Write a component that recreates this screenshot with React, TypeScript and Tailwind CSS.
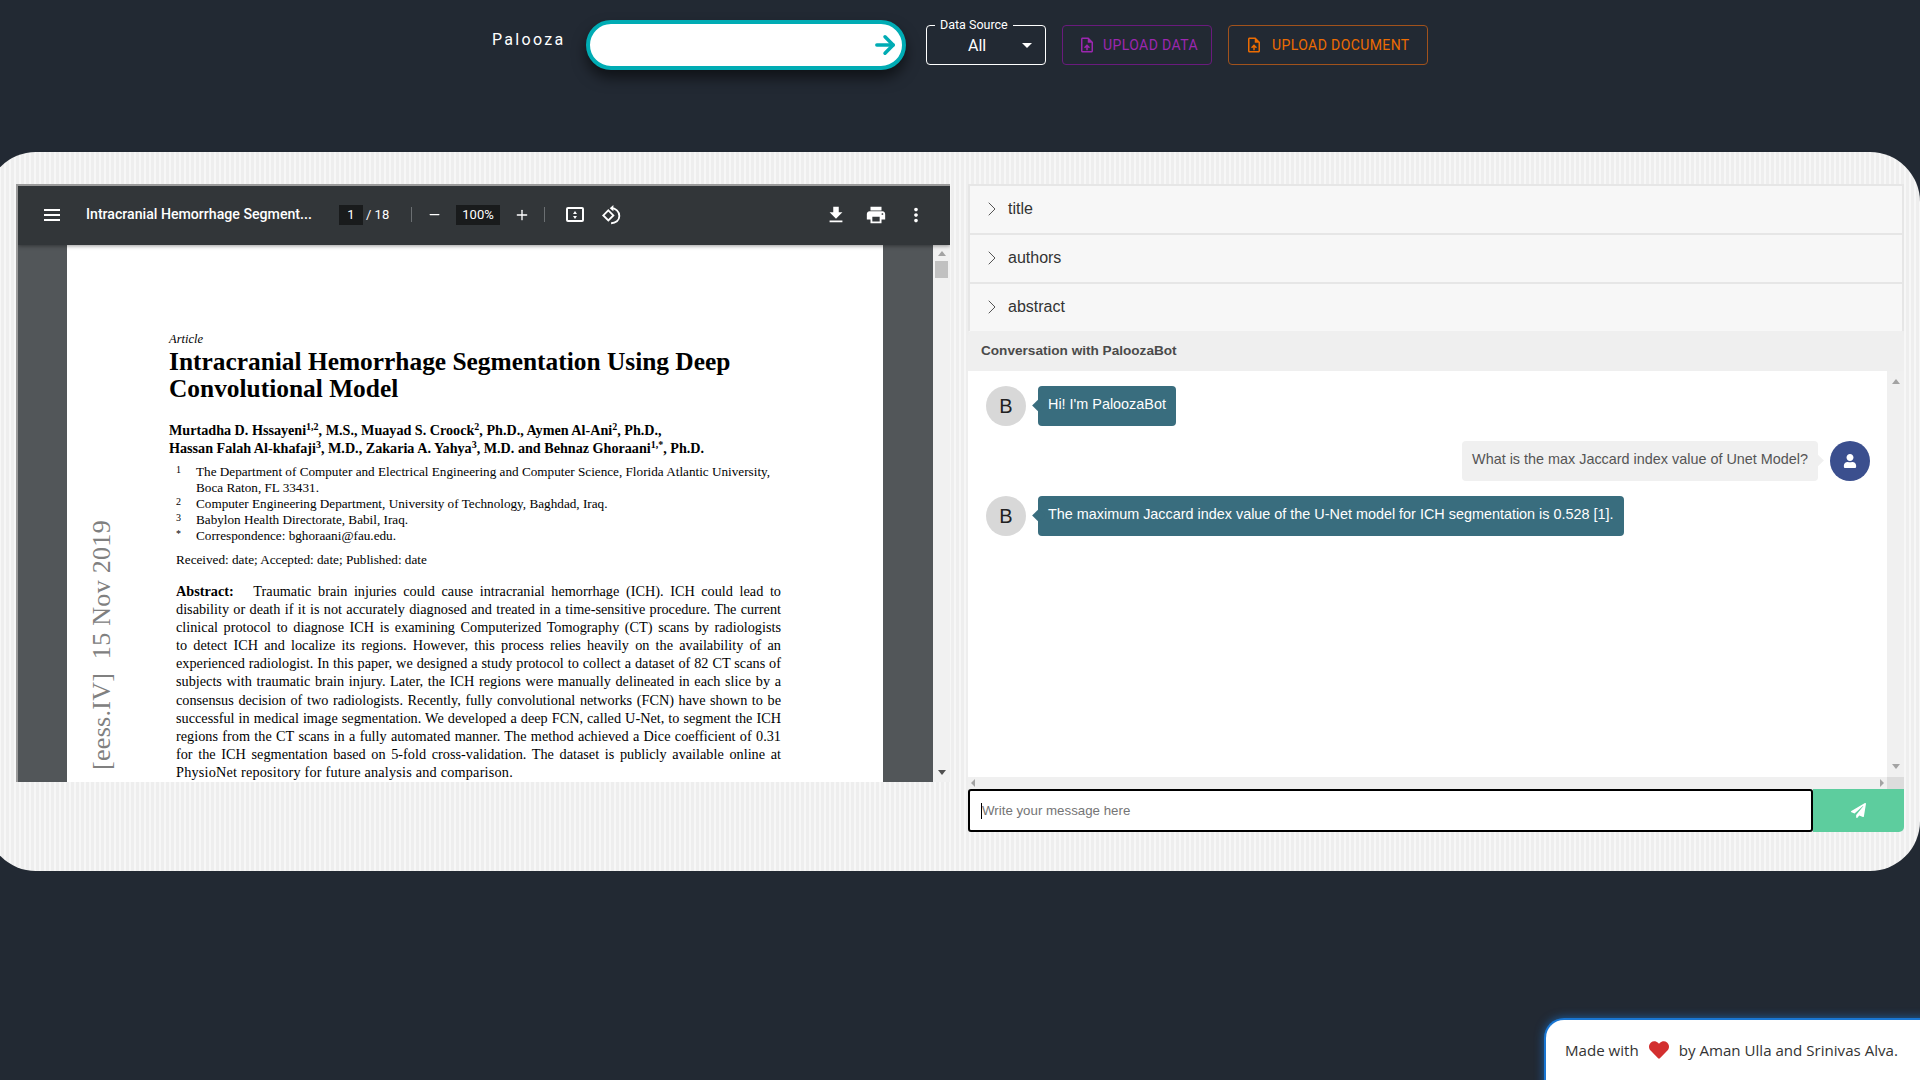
import React from "react";
import { ArrowRight, ChevronRight, Minus, Plus } from "lucide-react";
import { FaHeart, FaPaperPlane, FaUser } from "react-icons/fa";

const uploadPath =
  "M14 2H6c-1.1 0-1.99.9-1.99 2L4 20c0 1.1.89 2 1.99 2H18c1.1 0 2-.9 2-2V8l-6-6zm4 18H6V4h7v5h5v11zM8 15.01l1.41 1.41L11 14.84V19h2v-4.16l1.59 1.59L16 15.01 12.01 11 8 15.01z";

function MaterialIcon({ d, className }: { d: string; className: string }) {
  return (
    <svg viewBox="0 0 24 24" fill="currentColor" className={className}>
      <path d={d} />
    </svg>
  );
}

const affiliations = [
  ["1", "The Department of Computer and Electrical Engineering and Computer Science, Florida Atlantic University,"],
  ["", "Boca Raton, FL 33431."],
  ["2", "Computer Engineering Department, University of Technology, Baghdad, Iraq."],
  ["3", "Babylon Health Directorate, Babil, Iraq."],
  ["*", "Correspondence: bghoraani@fau.edu."],
];

const abstractLines = [
  "disability or death if it is not accurately diagnosed and treated in a time-sensitive procedure. The current",
  "clinical protocol to diagnose ICH is examining Computerized Tomography (CT) scans by radiologists",
  "to detect ICH and localize its regions.  However, this process relies heavily on the availability of an",
  "experienced radiologist. In this paper, we designed a study protocol to collect a dataset of 82 CT scans of",
  "subjects with traumatic brain injury. Later, the ICH regions were manually delineated in each slice by a",
  "consensus decision of two radiologists. Recently, fully convolutional networks (FCN) have shown to be",
  "successful in medical image segmentation. We developed a deep FCN, called U-Net, to segment the ICH",
  "regions from the CT scans in a fully automated manner. The method achieved a Dice coefficient of 0.31",
  "for the ICH segmentation based on 5-fold cross-validation. The dataset is publicly available online at",
];

function PdfViewer() {
  return (
    <div className="w-[934px] h-[598px] border-t-2 border-l-2 border-[#9a9a9a] flex flex-col overflow-hidden shrink-0">
      <div className="h-[59px] pb-[2px] bg-[#323639] text-white flex items-center text-[13px] font-['Roboto',sans-serif] shrink-0 z-10 shadow-[0_1px_4px_rgba(0,0,0,0.4)]">
        <div className="ml-[26px] w-[16px] flex flex-col gap-[3px]">
          <div className="h-[2px] bg-white" />
          <div className="h-[2px] bg-white" />
          <div className="h-[2px] bg-white" />
        </div>
        <div className="ml-[26px] w-[253px] text-[14.15px] font-medium truncate">Intracranial Hemorrhage Segment...</div>
        <div className="w-[24px] h-[20px] bg-[#191b1c] text-center leading-[20px]">1</div>
        <div className="ml-[3px] w-[24px] whitespace-nowrap">/ 18</div>
        <div className="ml-[21px] w-px h-[15px] bg-[#6b6f72]" />
        <Minus className="ml-[15px] w-[15px] h-[15px]" />
        <div className="ml-[14px] w-[44px] h-[20px] bg-[#191b1c] text-center leading-[20px]">100%</div>
        <Plus className="ml-[14px] w-[16px] h-[16px]" />
        <div className="ml-[14px] w-px h-[15px] bg-[#6b6f72]" />
        <div className="ml-[21px] w-[18px] h-[15px] border-2 border-white rounded-[2px] flex flex-col items-center justify-center gap-[2px]">
          <div className="w-0 h-0 border-x-[2.5px] border-x-transparent border-b-[3px] border-b-white" />
          <div className="w-0 h-0 border-x-[2.5px] border-x-transparent border-t-[3px] border-t-white" />
        </div>
        <svg viewBox="0 0 24 24" className="ml-[17px] w-[22px] h-[22px]" fill="none" stroke="white" strokeWidth="2">
          <path d="M8 7l5.5 5.5L8 18l-5.5-5.5z" />
          <path d="M11 4.5c5 0 9 3.5 9 8.5s-4 8-9 8" />
          <path d="M13.5 1L9.5 4.5l4 3.5z" fill="white" stroke="none" />
        </svg>
        <div className="ml-auto flex items-center mr-[23px] gap-[18px]">
          <MaterialIcon d="M19 9h-4V3H9v6H5l7 7 7-7zM5 18v2h14v-2H5z" className="w-[22px] h-[22px]" />
          <MaterialIcon
            d="M19 8H5c-1.66 0-3 1.34-3 3v6h4v4h12v-4h4v-6c0-1.66-1.34-3-3-3zm-3 11H8v-5h8v5zm3-7c-.55 0-1-.45-1-1s.45-1 1-1 1 .45 1 1-.45 1-1 1zm-1-9H6v4h12V3z"
            className="w-[22px] h-[22px]"
          />
          <MaterialIcon
            d="M12 8c1.1 0 2-.9 2-2s-.9-2-2-2-2 .9-2 2 .9 2 2 2zm0 2c-1.1 0-2 .9-2 2s.9 2 2 2 2-.9 2-2-.9-2-2-2zm0 6c-1.1 0-2 .9-2 2s.9 2 2 2 2-.9 2-2-.9-2-2-2z"
            className="w-[22px] h-[22px]"
          />
        </div>
      </div>
      <div className="flex-1 flex min-h-0">
        <div className="flex-1 bg-[#525659] pl-[49px] overflow-hidden">
          <div className="w-[816px] h-[800px] bg-white pt-[87px] pl-[102px] relative text-black font-['Liberation_Serif',serif]">
            <div className="absolute left-[15px] top-[275px] h-[250px] [writing-mode:vertical-rl] rotate-180 text-[26px] tracking-[0.3px] text-[#808080] whitespace-nowrap">
              [eess.IV]&nbsp; 15 Nov 2019
            </div>
            <div className="text-[12.5px] italic leading-[14px]">Article</div>
            <div className="text-[25.4px] font-bold leading-[27px] mt-[2px]">
              <div>Intracranial Hemorrhage Segmentation Using Deep</div>
              <div>Convolutional Model</div>
            </div>
            <div className="mt-[19px] text-[14.15px] font-bold leading-[18px]">
              <div>
                Murtadha D. Hssayeni<sup className="text-[10px]">1,2</sup>, M.S., Muayad S. Croock<sup className="text-[10px]">2</sup>, Ph.D., Aymen Al-Ani<sup className="text-[10px]">2</sup>, Ph.D.,
              </div>
              <div>
                Hassan Falah Al-khafaji<sup className="text-[10px]">3</sup>, M.D., Zakaria A. Yahya<sup className="text-[10px]">3</sup>, M.D. and Behnaz Ghoraani<sup className="text-[10px]">1,*</sup>, Ph.D.
              </div>
            </div>
            <div className="mt-[7px] ml-[7px] text-[13.2px] leading-[16px]">
              {affiliations.map(([n, text]) => (
                <div key={text} className="flex">
                  <div className="w-[20px] text-[10px] leading-[12px] shrink-0">{n}</div>
                  <div>{text}</div>
                </div>
              ))}
            </div>
            <div className="mt-[8px] ml-[7px] text-[13.2px] leading-[16px]">Received: date; Accepted: date; Published: date</div>
            <div className="mt-[14px] ml-[7px] w-[605px] text-[14.25px] leading-[18.1px]">
              <div className="text-justify [text-align-last:justify]">
                <b>Abstract:</b>&nbsp;&nbsp; Traumatic brain injuries could cause intracranial hemorrhage (ICH). ICH could lead to
              </div>
              {abstractLines.map((line) => (
                <div key={line} className="text-justify [text-align-last:justify] whitespace-nowrap">
                  {line}
                </div>
              ))}
              <div className="tracking-[0.2px]">PhysioNet repository for future analysis and comparison.</div>
            </div>
          </div>
        </div>
        <div className="w-[17px] bg-[#f1f1f1] flex flex-col items-center shrink-0">
          <div className="mt-[6px] w-0 h-0 border-x-[4px] border-x-transparent border-b-[5px] border-b-[#a3a3a3]" />
          <div className="mt-[5px] w-[13px] h-[17px] bg-[#c1c1c1]" />
          <div className="mt-auto mb-[7px] w-0 h-0 border-x-[4px] border-x-transparent border-t-[5px] border-t-[#505050]" />
        </div>
      </div>
    </div>
  );
}

function Accordion({ label, last }: { label: string; last?: boolean }) {
  return (
    <div
      className={
        last
          ? "h-[47px] flex items-center pl-[10px] pb-[2px] text-[16px] text-[#333] gap-[4px]"
          : "h-[49px] pb-[2px] border-b-2 border-[#e6e6e6] flex items-center pl-[10px] text-[16px] text-[#333] gap-[4px]"
      }
    >
      <ChevronRight className="w-[24px] h-[24px] text-[#555]" strokeWidth={1} />
      <span>{label}</span>
    </div>
  );
}

function BotRow({ text }: { text: string }) {
  return (
    <div className="flex items-center">
      <div className="w-[40px] h-[40px] rounded-full bg-[#d8d8d8] flex items-center justify-center text-[20px] text-[#222] mr-[12px]">B</div>
      <div className="relative bg-[#396d7e] text-white text-[14.4px] rounded-[4px] h-[40px] px-[10px] pt-[9px] leading-[18px] whitespace-nowrap">
        <div className="absolute -left-[4px] top-[15px] w-[9px] h-[9px] bg-[#396d7e] rotate-45" />
        {text}
      </div>
    </div>
  );
}

function ChatPanel() {
  return (
    <div className="w-[936px] flex flex-col font-['Liberation_Sans',sans-serif] shrink-0">
      <div className="bg-[#f7f7f7] border-x-2 border-t-2 border-[#e6e6e6]">
        <Accordion label="title" />
        <Accordion label="authors" />
        <Accordion label="abstract" last />
      </div>
      <div className="h-[40px] bg-[#efefef] rounded-t-[4px] flex items-center pl-[13px] text-[13.6px] font-bold text-[#4a4a4a]">
        Conversation with PaloozaBot
      </div>
      <div className="h-[418px] bg-white flex">
        <div className="flex-1 flex flex-col">
          <div className="flex-1 pt-[15px] pl-[18px] pr-[17px] flex flex-col gap-[15px]">
            <BotRow text="Hi! I'm PaloozaBot" />
            <div className="flex items-center justify-end">
              <div className="relative bg-[#f0f0f0] text-[#555] text-[14.4px] rounded-[4px] h-[40px] px-[10px] pt-[9px] leading-[18px] whitespace-nowrap mr-[12px]">
                <div className="absolute -right-[4px] top-[15px] w-[9px] h-[9px] bg-[#f0f0f0] rotate-45" />
                What is the max Jaccard index value of Unet Model?
              </div>
              <div className="w-[40px] h-[40px] rounded-full bg-[#3b4f8e] flex items-center justify-center text-white">
                <FaUser className="w-[14px] h-[14px]" />
              </div>
            </div>
            <BotRow text="The maximum Jaccard index value of the U-Net model for ICH segmentation is 0.528 [1]." />
          </div>
          <div className="h-[12px] bg-[#f0f0f0] flex items-center justify-between px-[3px]">
            <div className="w-0 h-0 border-y-[4px] border-y-transparent border-r-[4px] border-r-[#a3a3a3]" />
            <div className="w-0 h-0 border-y-[4px] border-y-transparent border-l-[4px] border-l-[#a3a3a3]" />
          </div>
        </div>
        <div className="w-[17px] bg-[#f0f0f0] flex flex-col items-center shrink-0">
          <div className="mt-[8px] w-0 h-0 border-x-[4px] border-x-transparent border-b-[5px] border-b-[#a3a3a3]" />
          <div className="mt-auto mb-[8px] w-0 h-0 border-x-[4px] border-x-transparent border-t-[5px] border-t-[#a3a3a3]" />
          <div className="w-[17px] h-[12px] bg-[#dcdcdc]" />
        </div>
      </div>
      <div className="h-[43px] flex">
        <div className="flex-1 bg-white border-2 border-black rounded-[3px] flex items-center pl-[11px] text-[13.3px] text-[#757575]">
          <div className="w-px h-[16px] bg-black" />
          Write your message here
        </div>
        <div className="w-[91px] bg-[#5dcd9e] rounded-br-[5px] flex items-center justify-center text-white">
          <FaPaperPlane className="w-[15px] h-[15px]" />
        </div>
      </div>
    </div>
  );
}

export default function App() {
  return (
    <div className="w-screen h-screen overflow-hidden bg-[#222933] relative">
      <div className="h-[152px] pt-[20px] flex items-start font-['Roboto',sans-serif]">
        <div className="ml-[492px] mt-[8px] w-[94px] text-[16px] tracking-[2.3px] text-white">Palooza</div>
        <div className="w-[320px] h-[50px] rounded-[25px] bg-white border-[4px] border-[#00acb4] flex items-center justify-end pr-[3px] shadow-[0_8px_14px_rgba(0,0,0,0.55)]">
          <ArrowRight className="w-[28px] h-[28px] text-[#00acb4]" strokeWidth={3} />
        </div>
        <div className="ml-[20px] mt-[5px] w-[120px] h-[40px] border border-white rounded-[4px] relative text-white">
          <div className="absolute left-[8px] -top-[8px] bg-[#222933] px-[5px] text-[12.5px] leading-[14px]">Data Source</div>
          <div className="absolute left-[41px] top-[10px] text-[16px] leading-[20px]">All</div>
          <div className="absolute right-[13px] top-[17px] w-0 h-0 border-x-[5px] border-x-transparent border-t-[5px] border-t-white" />
        </div>
        <div className="ml-[16px] mt-[5px] w-[150px] h-[40px] border border-[#6a1b7d] rounded-[4px] flex items-center pl-[15px] text-[#9c27b0] text-[14px] tracking-[0.4px]">
          <MaterialIcon d={uploadPath} className="w-[18px] h-[18px] mr-[7px]" />
          UPLOAD DATA
        </div>
        <div className="ml-[16px] mt-[5px] w-[200px] h-[40px] border border-[#a1521c] rounded-[4px] flex items-center pl-[16px] text-[#ed6c02] text-[14px] tracking-[0.4px]">
          <MaterialIcon d={uploadPath} className="w-[18px] h-[18px] mr-[9px]" />
          UPLOAD DOCUMENT
        </div>
      </div>
      <div className="-ml-[14px] w-[1934px] h-[719px] rounded-[50px] bg-[repeating-linear-gradient(90deg,#eeeeee_0px,#eeeeee_3px,#f7f7f7_3px,#f7f7f7_5px)] pt-[32px] pl-[30px] flex gap-[18px]">
        <PdfViewer />
        <ChatPanel />
      </div>
      <div className="absolute left-[1544px] top-[1018px] w-[400px] h-[80px] bg-white border-t-2 border-l-2 border-[#1976d2] rounded-tl-[20px] shadow-[0_0_10px_rgba(25,118,210,0.7)] flex items-start pl-[19px] pt-[19px] text-[15.1px] text-[#333] font-['Open_Sans',sans-serif]">
        <span>Made with</span>
        <FaHeart className="w-[20px] h-[20px] mt-[1px] mx-[10px] text-[#d32f2f]" />
        <span>by Aman Ulla and Srinivas Alva.</span>
      </div>
    </div>
  );
}
